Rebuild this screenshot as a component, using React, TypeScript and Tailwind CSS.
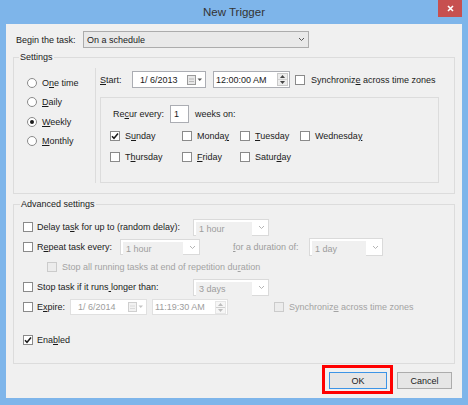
import React from 'react';

const Acc = ({ text, k, className = '' }: { text: string; k?: number; className?: string }) => {
  if (k === undefined) return <span className={className}>{text}</span>;
  return (
    <span className={className}>
      {text.slice(0, k)}
      <span className="underline underline-offset-[1px]">{text[k]}</span>
      {text.slice(k + 1)}
    </span>
  );
};

const Check = ({ checked = false, disabled = false }: { checked?: boolean; disabled?: boolean }) => (
  <span
    className={`w-[10px] h-[10px] shrink-0 border flex items-center justify-center ${
      disabled ? 'border-[#cbcbcb] bg-[#ececec]' : 'border-[#8a8a8a] bg-white'
    }`}
  >
    {checked && (
      <svg width="8" height="8" viewBox="0 0 8 8">
        <polyline points="1,4.2 3,6.3 7,1.5" fill="none" stroke="#1b1b1b" strokeWidth="1.5" />
      </svg>
    )}
  </span>
);

const Radio = ({ checked = false }: { checked?: boolean }) => (
  <span className="w-[10px] h-[10px] shrink-0 rounded-full border border-[#8a8a8a] bg-white flex items-center justify-center">
    {checked && <span className="w-[4px] h-[4px] rounded-full bg-[#1b1b1b]" />}
  </span>
);

const Chevron = ({ color = '#555' }: { color?: string }) => (
  <svg width="7" height="5" viewBox="0 0 7 5">
    <polyline points="1,1 3.5,3.5 6,1" fill="none" stroke={color} strokeWidth="1" />
  </svg>
);

const Combo = ({ value, w, h = 17, disabled = false }: { value: string; w: number; h?: number; disabled?: boolean }) => (
  <div
    className={`flex items-center border ${disabled ? 'border-[#dadada] bg-white text-[#9d9d9d]' : 'border-[#acacac] bg-[#e9e9e9]'}`}
    style={{ width: w, height: h }}
  >
    <span className={`flex-1 h-full flex items-center pl-[3px] ${disabled ? 'bg-[#f0f0f0] m-[2px] h-auto self-stretch' : ''}`}>{value}</span>
    <span className="w-[14px] flex items-center justify-center">
      <Chevron color={disabled ? '#b5b5b5' : '#555'} />
    </span>
  </div>
);

const DateBox = ({ value, w, disabled = false }: { value: string; w: number; disabled?: boolean }) => (
  <div
    className={`h-full flex items-center border bg-white ${disabled ? 'border-[#e0e0e0] text-[#9d9d9d]' : 'border-[#abadb3]'}`}
    style={{ width: w }}
  >
    <span className="flex-1 pl-[7px]">{value}</span>
    <svg width="16" height="10" viewBox="0 0 16 10" className="mr-[2px]">
      <rect x="0.5" y="0.5" width="8" height="9" fill={disabled ? '#f2f2f2' : '#e8e8e8'} stroke={disabled ? '#cfcfcf' : '#9a9a9a'} />
      <line x1="2" y1="4" x2="7" y2="4" stroke={disabled ? '#dadada' : '#b8b8b8'} />
      <line x1="2" y1="6.5" x2="7" y2="6.5" stroke={disabled ? '#dadada' : '#b8b8b8'} />
      <polygon points="10.5,3.5 15,3.5 12.75,6" fill={disabled ? '#c4c4c4' : '#555'} />
    </svg>
  </div>
);

const TimeBox = ({ value, w, disabled = false }: { value: string; w: number; disabled?: boolean }) => (
  <div
    className={`h-full flex items-center border bg-white ${disabled ? 'border-[#e0e0e0] text-[#9d9d9d]' : 'border-[#abadb3]'}`}
    style={{ width: w }}
  >
    <span className="flex-1 pl-[2px]">{value}</span>
    <div className={`w-[11px] h-[13px] mr-[1px] flex flex-col border ${disabled ? 'border-[#e6e6e6] bg-[#f6f6f6]' : 'border-[#c9c9c9] bg-[#ececec]'}`}>
      <span className="flex-1 flex items-center justify-center border-b border-[#cfcfcf]">
        <svg width="5" height="3" viewBox="0 0 5 3"><polygon points="0,3 5,3 2.5,0" fill={disabled ? '#bdbdbd' : '#444'} /></svg>
      </span>
      <span className="flex-1 flex items-center justify-center">
        <svg width="5" height="3" viewBox="0 0 5 3"><polygon points="0,0 5,0 2.5,3" fill={disabled ? '#bdbdbd' : '#444'} /></svg>
      </span>
    </div>
  </div>
);

const days: [string, number][] = [
  ['Sunday', 1],
  ['Monday', 5],
  ['Tuesday', 0],
  ['Wednesday', 8],
  ['Thursday', 1],
  ['Friday', 0],
  ['Saturday', 5],
];

export default function App() {
  return (
    <div className="w-[468px] h-[405px] bg-[#7eb5ea] flex flex-col font-['Liberation_Sans',Arial,sans-serif] text-[9px] leading-[12px] text-[#1b1b1b]">
      {/* title bar */}
      <div className="relative h-[24px] shrink-0 flex items-center justify-center text-[11.5px] text-[#333]">
        New Trigger
        <div className="absolute right-[6px] top-0 w-[24px] h-[17px] bg-[#c75050] flex items-center justify-center">
          <svg width="7" height="7" viewBox="0 0 7 7">
            <path d="M1 1 L6 6 M6 1 L1 6" stroke="#fff" strokeWidth="1.6" />
          </svg>
        </div>
      </div>

      <div className="mx-[6px] h-[374px] shrink-0 bg-[#f0f0f0] flex flex-col">
        {/* begin the task */}
        <div className="mt-[7px] pl-[10px] flex items-center h-[17px]">
          <span className="w-[67px]">
            <Acc text="Begin the task:" k={2} />
          </span>
          <Combo value="On a schedule" w={226} />
        </div>

        {/* settings */}
        <fieldset className="ml-[7px] mt-[3px] w-[442px] border border-[#dcdcdc] px-0">
          <legend className="ml-[5px] px-[1px]">Settings</legend>
          <div className="flex pt-[5px] pb-[10px]">
            <div className="w-[81px] pl-[13px] pt-[5px] flex flex-col">
              {[
                ['One time', 1, false],
                ['Daily', 0, false],
                ['Weekly', 0, true],
                ['Monthly', 0, false],
              ].map(([t, k, c]) => (
                <div key={t as string} className="h-[19.5px] flex items-center gap-[5px]">
                  <Radio checked={c as boolean} />
                  <Acc text={t as string} k={k as number} />
                </div>
              ))}
            </div>
            <div className="border-l border-[#dcdcdc] pl-[4px] flex flex-col">
              <div className="mt-[3px] h-[17px] flex items-center">
                <span className="w-[32px]">
                  <Acc text="Start:" k={0} />
                </span>
                <DateBox value="1/  6/2013" w={74} />
                <span className="w-[7px]" />
                <TimeBox value="12:00:00 AM" w={77} />
                <span className="w-[5px]" />
                <Check />
                <span className="ml-[6px]">
                  <Acc text="Synchronize across time zones" k={10} />
                </span>
              </div>
              <div className="mt-[9px] w-[339px] h-[86px] border border-[#dcdcdc] flex flex-col">
                <div className="mt-[7px] pl-[12px] h-[18px] flex items-center">
                  <span className="w-[57px]">
                    <Acc text="Recur every:" k={2} />
                  </span>
                  <div className="w-[19px] h-full border border-[#abadb3] bg-white pl-[3px] flex items-center">1</div>
                  <span className="ml-[6px]">weeks on:</span>
                </div>
                <div className="mt-[6px] pl-[9px] grid grid-cols-[72px_58px_60px_auto] gap-y-[7px]">
                  {days.map(([d, k], i) => (
                    <div key={d} className="h-[14px] flex items-center gap-[5px]">
                      <Check checked={i === 0} />
                      <Acc text={d} k={k} />
                    </div>
                  ))}
                </div>
              </div>
            </div>
          </div>
        </fieldset>

        {/* advanced settings */}
        <fieldset className="ml-[7px] mt-[4px] w-[442px] border border-[#dcdcdc] px-0">
          <legend className="ml-[6px] px-[1px]">Advanced settings</legend>
          <div className="pt-[7px] pb-[13px] flex flex-col">
            <div className="h-[20px] pl-[9px] flex items-center">
              <Check />
              <span className="ml-[4px] w-[156px]">
                <Acc text="Delay task for up to (random delay):" k={8} />
              </span>
              <Combo value="1 hour" w={76} disabled />
            </div>
            <div className="h-[20px] pl-[9px] flex items-center">
              <Check />
              <span className="ml-[4px] w-[83px]">
                <Acc text="Repeat task every:" k={1} />
              </span>
              <Combo value="1 hour" w={80} h={16} disabled />
              <span className="ml-[33px] w-[76px] text-[#9d9d9d]">
                <Acc text="for a duration of:" k={0} />
              </span>
              <Combo value="1 day" w={74} h={18} disabled />
            </div>
            <div className="h-[20px] pl-[33px] flex items-center text-[#a3a3a3]">
              <Check disabled />
              <span className="ml-[5px]">
                <Acc text="Stop all running tasks at end of repetition duration" k={46} />
              </span>
            </div>
            <div className="h-[20px] pl-[9px] flex items-center">
              <Check />
              <span className="ml-[4px] w-[156px]">
                <Acc text="Stop task if it runs longer than:" k={20} />
              </span>
              <Combo value="3 days" w={76} disabled />
            </div>
            <div className="h-[20px] pl-[9px] flex items-center">
              <Check />
              <span className="ml-[4px] w-[33px]">
                <Acc text="Expire:" k={1} />
              </span>
              <div className="h-[16px] flex items-center">
                <DateBox value="1/  6/2014" w={77} disabled />
                <span className="w-[5px]" />
                <TimeBox value="11:19:30 AM" w={76} disabled />
              </div>
              <span className="ml-[46px]">
                <Check disabled />
              </span>
              <span className="ml-[5px] text-[#a3a3a3]">
                <Acc text="Synchronize across time zones" k={10} />
              </span>
            </div>
            <div className="mt-[13px] h-[20px] pl-[9px] flex items-center">
              <Check checked />
              <span className="ml-[4px]">
                <Acc text="Enabled" k={3} />
              </span>
            </div>
          </div>
        </fieldset>

        {/* buttons */}
        <div className="mt-[1px] pr-[10px] flex justify-end items-start gap-[4px]">
          <div className="border-[3px] border-[#ff0000] pt-[4px] pl-[4px] pr-[3px] pb-[2px]">
            <button className="w-[58px] h-[17px] border border-[#3c94e6] bg-[#e6e6e6] flex items-center justify-center">
              OK
            </button>
          </div>
          <button className="mt-[7px] w-[55px] h-[17px] border border-[#acacac] bg-[#e6e6e6] flex items-center justify-center">
            Cancel
          </button>
        </div>
      </div>
    </div>
  );
}
